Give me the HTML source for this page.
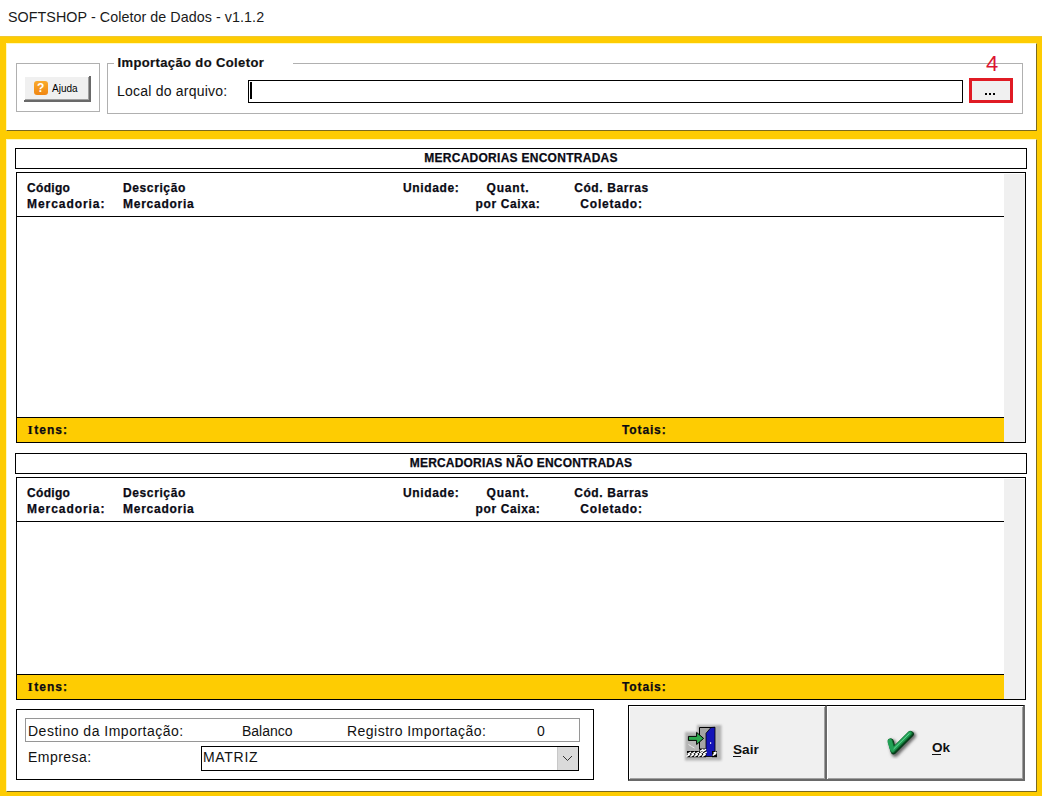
<!DOCTYPE html>
<html><head><meta charset="utf-8">
<style>
*{margin:0;padding:0;box-sizing:border-box}
html,body{width:1042px;height:796px;overflow:hidden;background:#fff;font-family:"Liberation Sans",sans-serif;color:#000}
.a{position:absolute}
.t{position:absolute;white-space:nowrap;line-height:1}
.b{font-weight:bold}
.h{font-size:12px;font-weight:bold;color:#0a0a14;-webkit-text-stroke:0.25px #0a0a14}
.r{font-size:14px;color:#111}
.c{transform:translateX(-50%)}
</style></head><body>
<!-- title -->
<div class="t" style="left:8px;top:10px;font-size:14.3px;letter-spacing:0.06px;color:#1a1a1a">SOFTSHOP - Coletor de Dados - v1.1.2</div>

<!-- yellow frame -->
<div class="a" style="left:0;top:36px;width:1042px;height:760px;background:#fecc02"></div>
<div class="a" style="left:0;top:36px;width:1042px;height:1px;background:#f0c830"></div>
<!-- top panel -->
<div class="a" style="left:6px;top:43px;width:1031px;height:88px;background:#fff;border-left:1px solid #fffac0;border-top:1px solid #fffac0;border-right:1px solid #7a6a20;border-bottom:1px solid #7a6a20"></div>
<!-- main panel -->
<div class="a" style="left:6px;top:139px;width:1031px;height:653px;background:#fff;border-left:1px solid #fffac0;border-top:1px solid #fffac0;border-right:1px solid #7a6a20;border-bottom:1px solid #7a6a20"></div>

<!-- Ajuda group -->
<div class="a" style="left:16px;top:63px;width:84px;height:49px;border:1px solid #b0b0b0"></div>
<div class="a" style="left:24px;top:76px;width:67px;height:26px;background:#f0f0f0;border-right:2px solid #696969;border-bottom:2px solid #696969;box-shadow:inset 1px 1px 0 #fff,inset -1px -1px 0 #a0a0a0"></div>
<div class="a" style="left:34px;top:81px;width:14px;height:14px;background:linear-gradient(#f9ab2c,#f08612);border-radius:3px"></div>
<div class="t b" style="left:37px;top:82px;font-size:12px;color:#fff">?</div>
<div class="t" style="left:52px;top:84px;font-size:10px">Ajuda</div>

<!-- Importacao group -->
<div class="a" style="left:107px;top:63px;width:916px;height:51px;border:1px solid #b0b0b0"></div>
<div class="a" style="left:114px;top:55px;width:179px;height:14px;background:#fff"></div>
<div class="t b" style="left:117.5px;top:56px;font-size:13px;letter-spacing:0.38px;color:#111;-webkit-text-stroke:0.2px #111">Importação do Coletor</div>
<div class="t r" style="left:117px;top:84px;letter-spacing:0.22px">Local do arquivo:</div>
<div class="a" style="left:248px;top:80px;width:715px;height:23px;border:1px solid #000;background:#fff"></div>
<div class="a" style="left:250px;top:82px;width:2px;height:17px;background:#000"></div>
<div class="a" style="left:969px;top:78px;width:44px;height:25px;border:3px solid #e01b24;background:#f0f0f0"></div>
<div class="a" style="left:985px;top:93px;width:2px;height:2px;background:#000"></div>
<div class="a" style="left:989px;top:93px;width:2px;height:2px;background:#000"></div>
<div class="a" style="left:993px;top:93px;width:2px;height:2px;background:#000"></div>
<div class="t" style="left:986px;top:53px;font-size:22px;color:#dc1432">4</div>

<!-- ===== GRID 1 ===== -->
<div class="a" style="left:15px;top:148px;width:1012px;height:21px;border:1px solid #000"></div>
<div class="t h c" style="left:521px;top:152px;letter-spacing:0.27px">MERCADORIAS ENCONTRADAS</div>
<div class="a" style="left:16px;top:172px;width:1010px;height:271px;border:1px solid #000"></div>
<div class="a" style="left:1004px;top:174px;width:21px;height:268px;background:#f0f0f0"></div>
<div class="a" style="left:17px;top:216px;width:987px;height:1px;background:#000"></div>
<div class="a" style="left:17px;top:417px;width:987px;height:25px;background:#fecc02;border-top:1px solid #000"></div>
<div class="t h" style="left:27px;top:182px;letter-spacing:0.32px">Código</div>
<div class="t h" style="left:27px;top:198px;letter-spacing:0.94px">Mercadoria:</div>
<div class="t h" style="left:123px;top:182px;letter-spacing:0.61px">Descrição</div>
<div class="t h" style="left:123px;top:198px;letter-spacing:0.74px">Mercadoria</div>
<div class="t h" style="left:403px;top:182px;letter-spacing:0.63px">Unidade:</div>
<div class="t h c" style="left:508px;top:182px;letter-spacing:0.82px">Quant.</div>
<div class="t h c" style="left:508px;top:198px;letter-spacing:0.63px">por Caixa:</div>
<div class="t h c" style="left:611.5px;top:182px;letter-spacing:0.61px">Cód. Barras</div>
<div class="t h c" style="left:611.5px;top:198px;letter-spacing:0.78px">Coletado:</div>
<div class="t h" style="left:27.5px;top:423px"><span style="font-family:'Liberation Serif';font-size:13.5px;letter-spacing:1.4px;-webkit-text-stroke:0.1px #0a0a14">I</span><span style="letter-spacing:1.05px">tens:</span></div>
<div class="t h" style="left:622px;top:424px;letter-spacing:0.87px">Totais:</div>

<!-- ===== GRID 2 ===== -->
<div class="a" style="left:15px;top:453px;width:1012px;height:21px;border:1px solid #000"></div>
<div class="t h c" style="left:521px;top:457px;letter-spacing:0.19px">MERCADORIAS NÃO ENCONTRADAS</div>
<div class="a" style="left:16px;top:477px;width:1010px;height:223px;border:1px solid #000"></div>
<div class="a" style="left:1004px;top:479px;width:21px;height:220px;background:#f0f0f0"></div>
<div class="a" style="left:17px;top:521px;width:987px;height:1px;background:#000"></div>
<div class="a" style="left:17px;top:674px;width:987px;height:25px;background:#fecc02;border-top:1px solid #000"></div>
<div class="t h" style="left:27px;top:487px;letter-spacing:0.32px">Código</div>
<div class="t h" style="left:27px;top:503px;letter-spacing:0.94px">Mercadoria:</div>
<div class="t h" style="left:123px;top:487px;letter-spacing:0.61px">Descrição</div>
<div class="t h" style="left:123px;top:503px;letter-spacing:0.74px">Mercadoria</div>
<div class="t h" style="left:403px;top:487px;letter-spacing:0.63px">Unidade:</div>
<div class="t h c" style="left:508px;top:487px;letter-spacing:0.82px">Quant.</div>
<div class="t h c" style="left:508px;top:503px;letter-spacing:0.63px">por Caixa:</div>
<div class="t h c" style="left:611.5px;top:487px;letter-spacing:0.61px">Cód. Barras</div>
<div class="t h c" style="left:611.5px;top:503px;letter-spacing:0.78px">Coletado:</div>
<div class="t h" style="left:27.5px;top:680px"><span style="font-family:'Liberation Serif';font-size:13.5px;letter-spacing:1.4px;-webkit-text-stroke:0.1px #0a0a14">I</span><span style="letter-spacing:1.05px">tens:</span></div>
<div class="t h" style="left:622px;top:681px;letter-spacing:0.87px">Totais:</div>

<!-- ===== bottom ===== -->
<div class="a" style="left:16px;top:709px;width:578px;height:71px;border:1px solid #000"></div>
<div class="a" style="left:25px;top:718px;width:555px;height:24px;border:1px solid #969696"></div>
<div class="t r" style="left:28px;top:724px;letter-spacing:0.5px">Destino da Importação:</div>
<div class="t r" style="left:242px;top:724px;letter-spacing:0px">Balanco</div>
<div class="t r" style="left:347px;top:724px;letter-spacing:0.47px">Registro Importação:</div>
<div class="t r" style="left:537px;top:724px">0</div>
<div class="t r" style="left:28px;top:750px;letter-spacing:0.45px">Empresa:</div>
<div class="a" style="left:201px;top:746px;width:378px;height:25px;border:1px solid #000;background:#fff"></div>
<div class="a" style="left:557px;top:747px;width:21px;height:23px;background:#dadada;border-left:1px solid #c8c8c8"></div>
<svg class="a" style="left:557px;top:747px" width="21" height="23"><path d="M6 9 L10.5 13.5 L15 9" fill="none" stroke="#333" stroke-width="1"/></svg>
<div class="t r" style="left:203px;top:750px;letter-spacing:0.7px">MATRIZ</div>

<!-- buttons -->
<div class="a" style="left:628px;top:705px;width:199px;height:76px;background:#f0f0f0;border-left:1px solid #000;border-top:1px solid #000;border-right:2px solid #696969;border-bottom:2px solid #696969;box-shadow:inset 1px 1px 0 #fff,inset -1px -1px 0 #a0a0a0"></div>
<div class="a" style="left:826px;top:705px;width:199px;height:76px;background:#f0f0f0;border-left:1px solid #6a6a6a;border-top:1px solid #000;border-right:2px solid #696969;border-bottom:2px solid #696969;box-shadow:inset 1px 1px 0 #fff,inset -1px -1px 0 #a0a0a0"></div>
<div class="t b" style="left:733px;top:743px;font-size:13.6px;color:#111">Sair</div>
<div class="a" style="left:733px;top:756px;width:8px;height:1px;background:#111"></div>
<div class="t b" style="left:932px;top:741px;font-size:13.6px;color:#111">Ok</div>
<div class="a" style="left:932px;top:754px;width:9px;height:1px;background:#111"></div>

<!-- Sair icon -->
<svg class="a" style="left:680px;top:720px" width="48" height="44" viewBox="0 0 48 44">
  <defs><filter id="bl" x="-20%" y="-20%" width="140%" height="140%"><feGaussianBlur stdDeviation="1"/></filter></defs>
  <path d="M17 5 H41.5 V40.5 H5 V12 H17 Z" fill="#b4b4b4" filter="url(#bl)"/>
  <rect x="19.5" y="7.5" width="15.5" height="21.5" fill="#a4a4a4"/>
  <path d="M19.5 29 V7.5 H35" fill="none" stroke="#000" stroke-width="1"/>
  <path d="M26 13.3 L31 7.5 L35 7.2 L35 36.5 L26 36.5 Z" fill="#1414b8" stroke="#000" stroke-width="0.8"/>
  <rect x="30" y="22.3" width="1.2" height="1.5" fill="#fff"/>
  <path d="M8.4 16.4 L16.6 16.4 L16.6 12.4 L23.6 18.4 L16.6 24.5 L16.6 20.4 L8.4 20.4 Z" fill="#2eaa4e" stroke="#000" stroke-width="1"/>
  <path d="M7 31 H19.4 V28.4 H26 V37.2 H7 Z" fill="#000"/>
  <path d="M8.0 33.9 l2.6 -1.5 M7.0 36.1 l2.6 -1.5 M11.9 33.9 l2.6 -1.5 M10.9 36.1 l2.6 -1.5 M15.8 33.9 l2.6 -1.5 M14.8 36.1 l2.6 -1.5 M19.7 33.9 l2.6 -1.5 M18.7 36.1 l2.6 -1.5 M23.6 33.9 l2.6 -1.5 M22.6 36.1 l2.6 -1.5 M20.5 31.2 l2.4 -1.6 M23.2 31.2 l2.4 -1.6" fill="none" stroke="#fff" stroke-width="1.5" stroke-linecap="round"/>
  <path d="M32 31 H37 V37.2 H32 Z" fill="#000"/>
  <path d="M33.2 35.2 l2.6 -1.5 M34 33 l2 -0.8" fill="none" stroke="#fff" stroke-width="1.5" stroke-linecap="round"/>
  <path d="M8.5 24.5 q3 2 6 3.5" fill="none" stroke="#eaeaea" stroke-width="1"/>
</svg>

<!-- Ok icon -->
<svg class="a" style="left:880px;top:724px" width="42" height="40" viewBox="0 0 42 40">
  <defs><filter id="b2" x="-30%" y="-30%" width="160%" height="160%"><feGaussianBlur stdDeviation="1.4"/></filter></defs>
  <path d="M10.5 17 L13 27.5 L30.5 9.5" fill="none" stroke="#6a6a6a" stroke-width="7" stroke-linecap="round" stroke-linejoin="round" filter="url(#b2)" transform="translate(2,2)"/>
  <path d="M10.5 17 L13 27 L30.5 9.5" fill="none" stroke="#063a18" stroke-width="5.6" stroke-linecap="round" stroke-linejoin="round" transform="translate(0.6,0.6)"/>
  <path d="M10.3 16.8 L12.8 26.6 L30.2 9.3" fill="none" stroke="#0f6a30" stroke-width="5" stroke-linecap="round" stroke-linejoin="round"/>
  <path d="M10 16.6 L12.6 26.2 L29.9 9" fill="none" stroke="#22a055" stroke-width="3.4" stroke-linecap="round" stroke-linejoin="round"/>
  <path d="M9.6 17.5 L11.8 24.5" fill="none" stroke="#22a055" stroke-width="4.2" stroke-linecap="round"/>
  <path d="M13.6 25 L29.6 9.3" fill="none" stroke="#72dca0" stroke-width="0.9"/>
</svg>

</body></html>
